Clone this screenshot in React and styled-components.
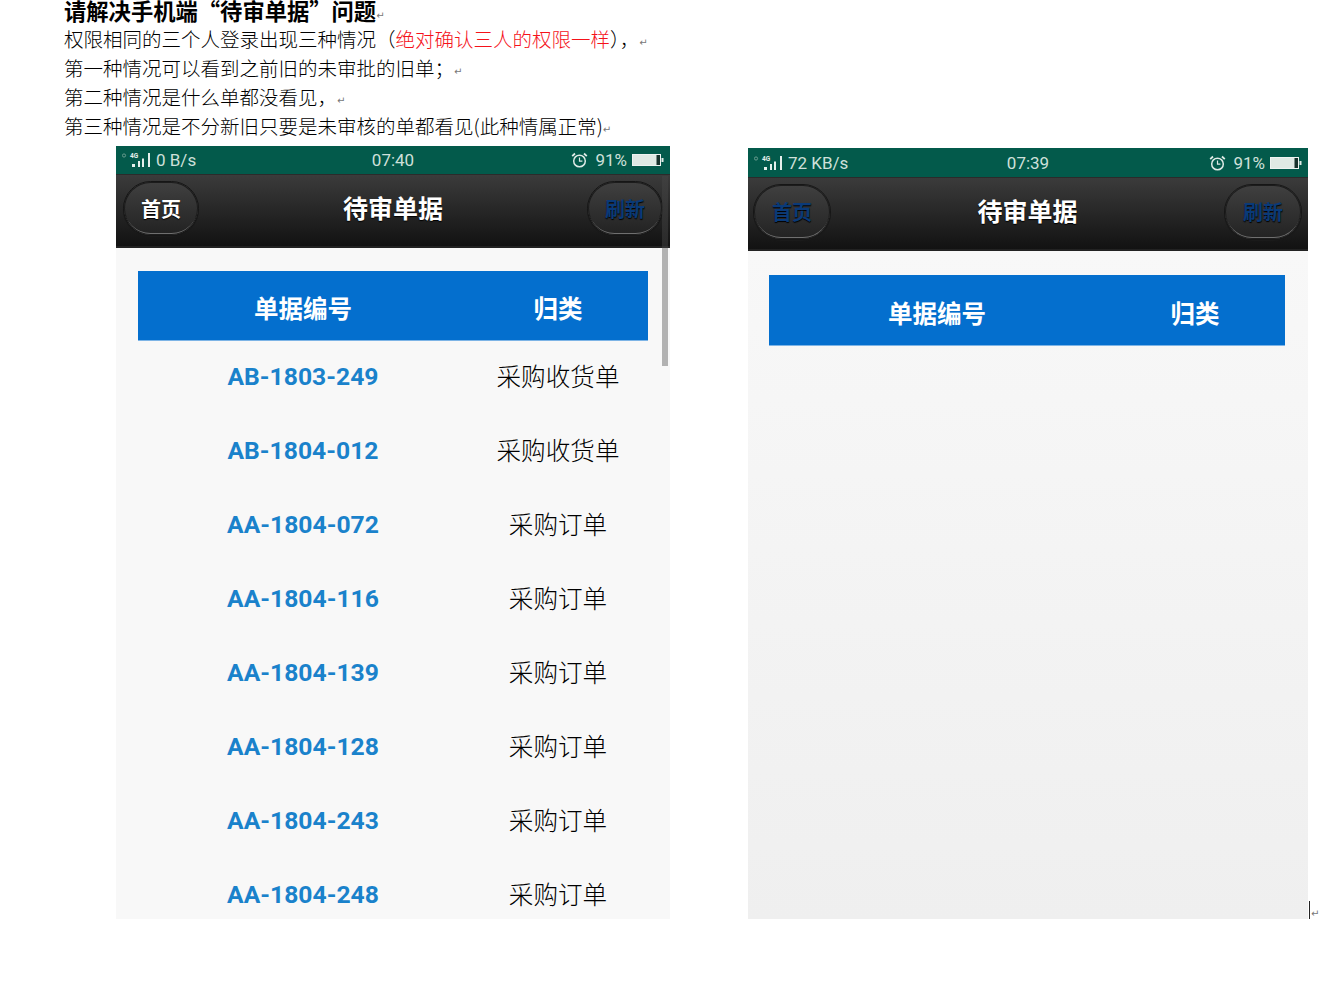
import React from 'react';
import styled, { createGlobalStyle, css } from 'styled-components';

const GlobalStyle = createGlobalStyle`
  html, body {
    margin: 0;
    padding: 0;
    background: #fff;
  }
  body {
    width: 1324px;
    height: 1006px;
    overflow: hidden;
    font-family: "Noto Sans CJK SC", "Liberation Sans", sans-serif;
  }
`;

const Page = styled.div`
  display: flex;
  flex-direction: column;
`;

const Doc = styled.div`
  padding-left: 64px;
  height: 146px;
`;

const DocLine = styled.div`
  height: 29px;
  line-height: 29px;
  white-space: nowrap;
  color: #000;
  font-size: 19.5px;
  font-weight: 300;
  ${(p) =>
    p.$heading &&
    css`
      height: 24px;
      line-height: 21px;
      font-size: 22.3px;
      font-weight: 700;
    `}
`;

const Red = styled.span`
  color: #f5121a;
`;

const ReturnMark = styled.span`
  display: inline-block;
  font-family: "DejaVu Sans", sans-serif;
  font-size: 10px;
  font-weight: 400;
  line-height: 1;
  color: #777;
  vertical-align: 1px;
`;

const Phones = styled.div`
  display: flex;
  align-items: flex-end;
  padding-left: 116px;
  gap: 78px;
  height: 773px;
`;

const Phone = styled.div`
  position: relative;
  display: flex;
  flex-direction: column;
  flex: none;
  width: ${(p) => p.$width}px;
  height: ${(p) => p.$height}px;
  overflow: hidden;
`;

const StatusBar = styled.div`
  display: grid;
  grid-template-columns: 1fr auto 1fr;
  align-items: center;
  flex: none;
  height: ${(p) => p.$height}px;
  padding: 0 6px;
  box-sizing: border-box;
  background: #035a4b;
  color: #cfe0da;
  font-family: Roboto, sans-serif;
  font-size: 17px;
`;

const StatusSide = styled.div`
  display: flex;
  align-items: center;
  gap: ${(p) => (p.$end ? 5 : 4)}px;
  justify-content: ${(p) => (p.$end ? 'flex-end' : 'flex-start')};
`;

const Percent = styled.span`
  margin-left: 2px;
`;

const NavBar = styled.div`
  display: flex;
  align-items: center;
  justify-content: space-between;
  flex: none;
  height: 74px;
  padding: 0 ${(p) => p.$right}px 4px ${(p) => p.$left}px;
  box-sizing: border-box;
  background: linear-gradient(#3b3b3b, #121212);
  border-top: 1px solid #2b2b2b;
  border-bottom: 2px solid #222;
`;

const NavTitle = styled.div`
  color: #fff;
  font-size: 25px;
  font-weight: 700;
  line-height: 1;
  margin-bottom: 2px;
  text-shadow: 0 1px 1px #000;
`;

const NavButton = styled.div`
  display: flex;
  align-items: center;
  justify-content: center;
  width: ${(p) => p.$width}px;
  height: ${(p) => p.$height}px;
  box-sizing: border-box;
  border-radius: 28px;
  border: 1px solid #161616;
  box-shadow: inset 0 0 0 1px #1c1c1c, inset 0 -2px 0 #6f6f6f, 0 1px 0 #1a1a1a;
  background: linear-gradient(#404040, #222);
  color: ${(p) => (p.$active ? '#0a3a78' : '#fff')};
  font-size: 20px;
  font-weight: 700;
  line-height: 1;
  text-shadow: 0 1px 1px #000;
`;

const Body = styled.div`
  flex: 1;
  padding: ${(p) => p.$top}px 22px 0 ${(p) => p.$left}px;
  background: ${(p) => (p.$fade ? 'linear-gradient(#f8f8f8, #efefef)' : '#f8f8f8')};
`;

const Table = styled.div`
  width: ${(p) => p.$width}px;
`;

const TableRow = styled.div`
  display: grid;
  grid-template-columns: ${(p) => p.$first}px 180px;
  align-items: center;
  justify-items: center;
  height: ${(p) => p.$height}px;
`;

const HeadRow = styled(TableRow)`
  box-sizing: border-box;
  padding-top: 4px;
  background: #046fce;
  box-shadow: 0 1px 0 #7db4e6;
  color: #fff;
  font-size: 24.5px;
  font-weight: 700;
`;

const DocNumber = styled.div`
  margin-bottom: 2px;
  color: #1a82cb;
  font-family: Roboto, sans-serif;
  font-size: 24.7px;
  font-weight: 700;
`;

const DocType = styled.div`
  margin-bottom: 4px;
  color: #000;
  font-size: 24.6px;
  font-weight: 300;
`;

const Scrollbar = styled.div`
  position: absolute;
  right: 2px;
  top: 30px;
  width: 6px;
  height: 190px;
  background: linear-gradient(rgba(70, 70, 70, 0.45) 38%, #b2b2b2 38%);
`;

const Caret = styled.div`
  position: relative;
  flex: none;
  width: 1px;
  height: 18px;
  margin-left: -77px;
  background: #222;
`;

const CaretReturn = styled(ReturnMark)`
  position: absolute;
  left: 2px;
  bottom: 0;
`;

function SignalIcon() {
  return (
    <svg width="30" height="16" viewBox="0 0 30 16">
      <circle cx="2" cy="3.5" r="1.6" fill="none" stroke="#7fa89c" strokeWidth="0.8" />
      <text x="8" y="5.5" fontFamily="Roboto, sans-serif" fontSize="6.5" fontWeight="700" fill="#e6f0ec">4G</text>
      <rect x="10" y="12" width="3" height="3" fill="#e6f0ec" />
      <rect x="16" y="9" width="2" height="6" fill="#e6f0ec" />
      <rect x="20" y="6.5" width="2" height="8.5" fill="#e6f0ec" />
      <rect x="26" y="1" width="2" height="14" fill="#e6f0ec" />
    </svg>
  );
}

function AlarmIcon() {
  return (
    <svg width="17" height="16" viewBox="0 0 17 16" fill="none" stroke="#dfeae6">
      <circle cx="8.5" cy="9" r="5.8" strokeWidth="1.5" />
      <path d="M8.5 5.6V9.2H11.4" strokeWidth="1.2" />
      <path d="M1.2 4.2L4 1.5M15.8 4.2L13 1.5" strokeWidth="1.8" />
    </svg>
  );
}

function BatteryIcon() {
  return (
    <svg width="32" height="14" viewBox="0 0 32 14">
      <rect x="0.5" y="1.5" width="28" height="11" fill="#dfe9e4" stroke="#eef3f1" />
      <rect x="24.5" y="2" width="3.5" height="10" fill="#17322c" />
      <rect x="29.5" y="5" width="2" height="4" fill="#dfeae6" />
    </svg>
  );
}

function PhoneScreen({ width, height, statusHeight, navLeft, navRight, buttonWidth, buttonHeight, top, left, speed, time, activeHome, activeRefresh, fade, tableWidth, first, headHeight, rows, scrollbar }) {
  return (
    <Phone $width={width} $height={height}>
      <StatusBar $height={statusHeight}>
        <StatusSide>
          <SignalIcon />
          <span>{speed}</span>
        </StatusSide>
        <span>{time}</span>
        <StatusSide $end>
          <AlarmIcon />
          <Percent>91%</Percent>
          <BatteryIcon />
        </StatusSide>
      </StatusBar>
      <NavBar $left={navLeft} $right={navRight}>
        <NavButton $width={buttonWidth} $height={buttonHeight} $active={activeHome}>首页</NavButton>
        <NavTitle>待审单据</NavTitle>
        <NavButton $width={buttonWidth} $height={buttonHeight} $active={activeRefresh}>刷新</NavButton>
      </NavBar>
      <Body $top={top} $left={left} $fade={fade}>
        <Table $width={tableWidth}>
          <HeadRow $first={first} $height={headHeight}>
            <span>单据编号</span>
            <span>归类</span>
          </HeadRow>
          {rows.map(([id, type]) => (
            <TableRow key={id} $first={first} $height={74}>
              <DocNumber>{id}</DocNumber>
              <DocType>{type}</DocType>
            </TableRow>
          ))}
        </Table>
      </Body>
      {scrollbar && <Scrollbar />}
    </Phone>
  );
}

const orders = [
  ['AB-1803-249', '采购收货单'],
  ['AB-1804-012', '采购收货单'],
  ['AA-1804-072', '采购订单'],
  ['AA-1804-116', '采购订单'],
  ['AA-1804-139', '采购订单'],
  ['AA-1804-128', '采购订单'],
  ['AA-1804-243', '采购订单'],
  ['AA-1804-248', '采购订单'],
];

export default function App() {
  return (
    <Page>
      <GlobalStyle />
      <Doc>
        <DocLine $heading>请解决手机端“待审单据”问题<ReturnMark>↵</ReturnMark></DocLine>
        <DocLine>权限相同的三个人登录出现三种情况（<Red>绝对确认三人的权限一样</Red>），<ReturnMark>↵</ReturnMark></DocLine>
        <DocLine>第一种情况可以看到之前旧的未审批的旧单；<ReturnMark>↵</ReturnMark></DocLine>
        <DocLine>第二种情况是什么单都没看见，<ReturnMark>↵</ReturnMark></DocLine>
        <DocLine>第三种情况是不分新旧只要是未审核的单都看见(此种情属正常)<ReturnMark>↵</ReturnMark></DocLine>
      </Doc>
      <Phones>
        <PhoneScreen
          width={554}
          height={773}
          statusHeight={28}
          navLeft={7}
          navRight={7}
          buttonWidth={76}
          buttonHeight={55}
          top={23}
          left={22}
          speed="0 B/s"
          time="07:40"
          activeRefresh
          tableWidth={510}
          first={330}
          headHeight={69}
          rows={orders}
          scrollbar
        />
        <PhoneScreen
          width={560}
          height={771}
          statusHeight={29}
          navLeft={5}
          navRight={6}
          buttonWidth={78}
          buttonHeight={56}
          top={24}
          left={21}
          speed="72 KB/s"
          time="07:39"
          activeHome
          activeRefresh
          fade
          tableWidth={516}
          first={336}
          headHeight={70}
          rows={[]}
        />
        <Caret>
          <CaretReturn>↵</CaretReturn>
        </Caret>
      </Phones>
    </Page>
  );
}
